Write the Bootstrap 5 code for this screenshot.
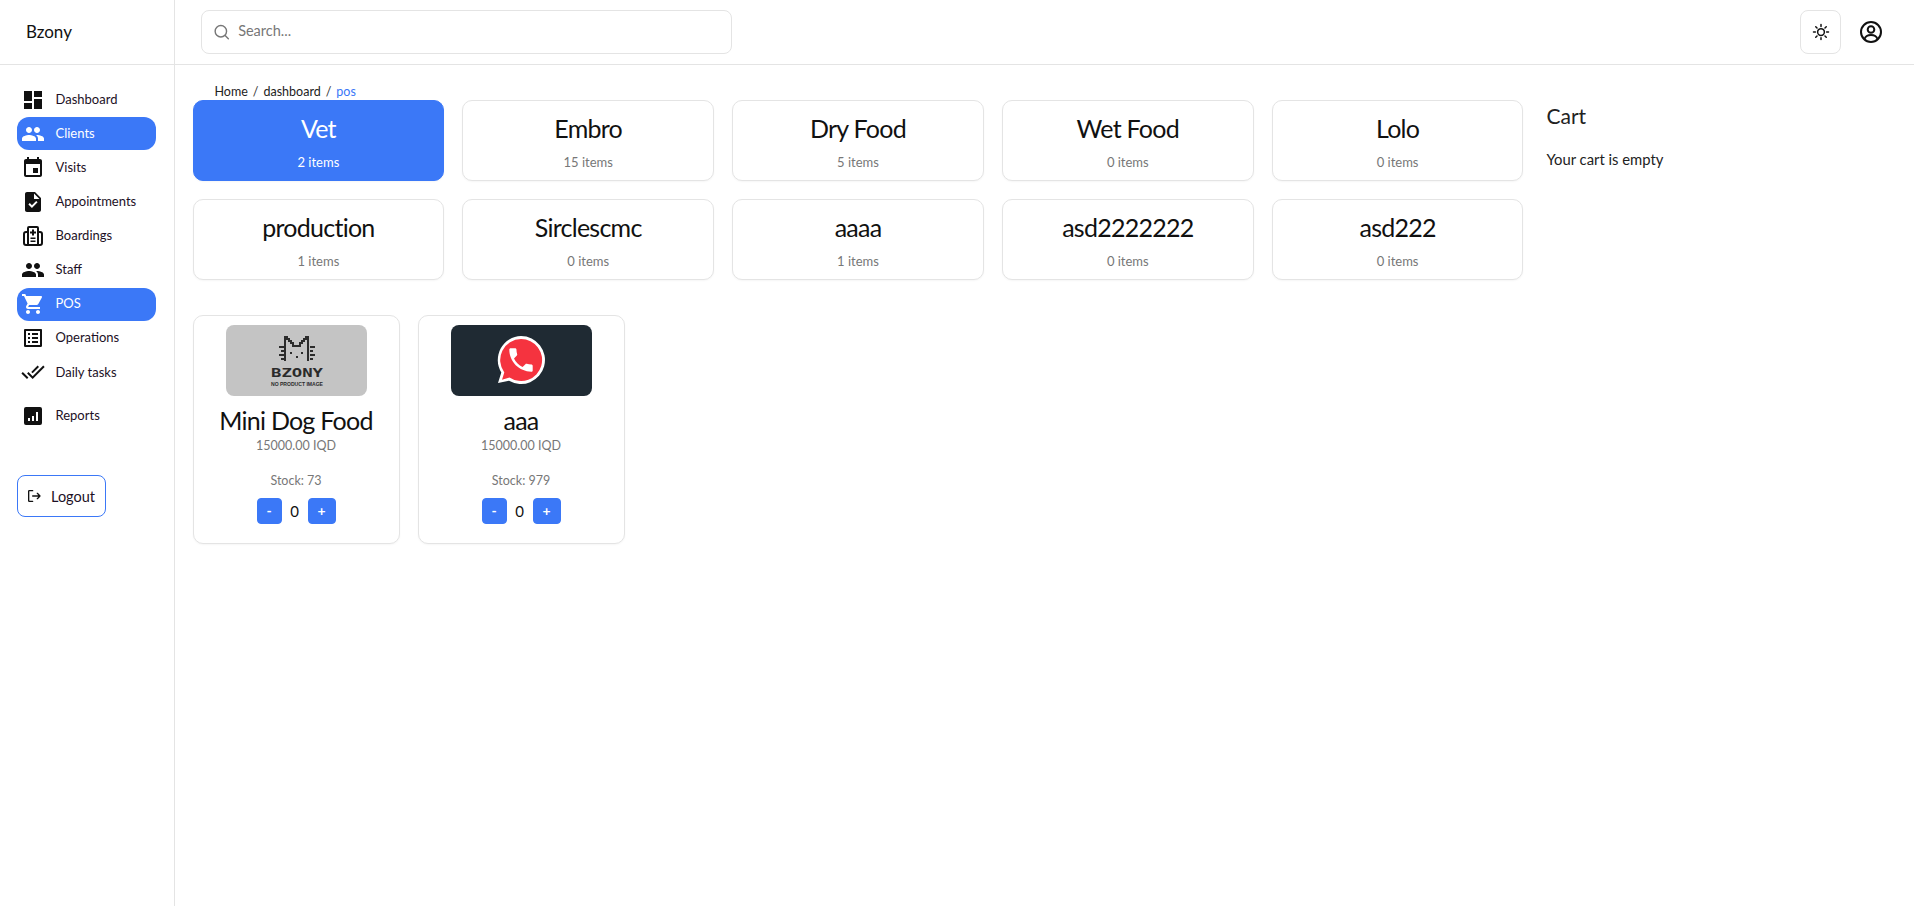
<!DOCTYPE html>
<html lang="en">
<head>
<meta charset="utf-8">
<title>Bzony POS</title>
<link href="https://cdn.jsdelivr.net/npm/bootstrap@5.3.0/dist/css/bootstrap.min.css" rel="stylesheet">
<style>
:root{--pri:#3b78f7;--line:#e4e4e4;}
html,body{height:100%;}
body{font-family:"Lato","Liberation Sans",sans-serif;color:#111;background:#fff;font-size:14px;}
.shell{min-height:906px;}
.side{width:175px;flex:0 0 175px;border-right:1px solid var(--line);}
.brand{height:65px;border-bottom:1px solid var(--line);padding-left:26px;font-size:17px;color:#111;}
.side-nav{padding:18px 18px 0 17px;}
.side-link{height:33px;margin-bottom:1.1px;border-radius:12px;padding:0 0 0 4px;color:#1c1025;font-size:13px;gap:10.5px;text-decoration:none;}
.side-link svg{width:24px;height:24px;flex:none;fill:#111;}
.side-link.on{background:var(--pri);color:#fff;}
.side-link.on svg{fill:#fff;}
.side-gap{margin-top:9.5px;}
.logout-btn{width:89px;height:42px;margin:42px 0 0 0;padding:0 0 0 8px;border:1px solid var(--pri);border-radius:8px;font-size:14.5px;color:#1c1025;gap:9px;}
.logout-btn:hover{border-color:var(--pri);}
.top{height:65px;border-bottom:1px solid var(--line);padding:0 31px 0 26px;}
.search{width:531px;height:44px;border:1px solid var(--line);border-radius:8px;padding-left:11px;gap:8px;color:#777;}
.search input{border:0;outline:0;padding:0 0 2px;font-size:14.5px;font-family:inherit;width:100%;background:transparent;}
.search input::placeholder{color:#777;opacity:1;}
.sun-btn{width:41px;height:44px;border:1px solid var(--line);border-radius:8px;padding:0;}
.acct{margin-left:18px;margin-right:0;padding:0;border:0;background:none;line-height:0;}
.content{padding:0 0 0 17.5px;}
.crumbs{margin:0;padding:0 0 0 22px;height:35px;align-items:flex-end;font-size:12.5px;--bs-breadcrumb-divider-color:#333;--bs-breadcrumb-item-padding-x:5px;--bs-breadcrumb-margin-bottom:0;}
.crumbs .breadcrumb-item{line-height:16px;color:#222;}
.crumbs .breadcrumb-item.active{color:var(--pri);}
.cat-grid{display:grid;grid-template-columns:repeat(5,251.8px);gap:18px;width:1332px;}
.cat{height:81px;border:1.5px solid var(--line);border-radius:10px;box-shadow:0 1px 2px rgba(0,0,0,.04);text-align:center;--bs-card-bg:#fff;}
.cat.sel{background:var(--pri);border-color:var(--pri);color:#fff;}
.cat-name{font-size:25px;letter-spacing:-.75px;line-height:32px;margin:11px 0 9px;font-weight:400;}
.cat-count{font-size:13px;line-height:18px;color:#777;}
.cat.sel .cat-count{color:#fff;}
.cart-pane{padding:0 0 0 22px;}
.cart-spacer{height:35px;}
.cart-title{font-size:21px;font-weight:400;margin:0;line-height:26px;padding-top:3px;color:#222;}
.cart-empty{font-size:14.8px;line-height:22px;margin:19px 0 0;color:#222;}
.prod-row{margin-top:35px;gap:18px;}
.prod{width:207px;height:229px;border:1.5px solid var(--line);border-radius:10px;box-shadow:0 1px 2px rgba(0,0,0,.04);text-align:center;padding-top:9px;}
.prod-pic{width:141px;height:71px;border-radius:8px;display:block;margin:0 auto;overflow:hidden;}
.prod-name{font-size:25px;letter-spacing:-.75px;font-weight:400;line-height:32px;margin:8px 0 0;}
.prod-price{font-size:12.5px;line-height:18px;color:#777;margin-top:1px;}
.prod-stock{font-size:12.5px;line-height:18px;color:#777;margin-top:17px;}
.qty{margin-top:8px;gap:0;}
.qty-btn{height:26px;padding:0;border-radius:4px;background:var(--pri);border-color:var(--pri);font-size:14px;line-height:1;font-weight:700;}
.qty-minus{width:25px;}
.qty-plus{width:28px;}
.qty-val{width:26px;font-size:15px;line-height:26px;}
</style>
</head>
<body>
<div class="d-flex shell">
  <aside class="side">
    <div class="brand d-flex align-items-center">Bzony</div>
    <nav class="side-nav d-flex flex-column">
      <a class="side-link d-flex align-items-center" href="#"><svg viewBox="0 0 24 24"><path d="M3 13h8V3H3v10zm0 8h8v-6H3v6zm10 0h8V11h-8v10zm0-18v6h8V3h-8z"/></svg>Dashboard</a>
      <a class="side-link on d-flex align-items-center" href="#"><svg viewBox="0 0 24 24"><path d="M16 11c1.66 0 2.99-1.34 2.99-3S17.66 5 16 5c-1.66 0-3 1.34-3 3s1.34 3 3 3zm-8 0c1.66 0 2.99-1.34 2.99-3S9.66 5 8 5C6.34 5 5 6.34 5 8s1.34 3 3 3zm0 2c-2.33 0-7 1.17-7 3.5V19h14v-2.5c0-2.33-4.67-3.5-7-3.5zm8 0c-.29 0-.62.02-.97.05 1.16.84 1.97 1.97 1.97 3.45V19h6v-2.5c0-2.33-4.67-3.5-7-3.5z"/></svg>Clients</a>
      <a class="side-link d-flex align-items-center" href="#"><svg viewBox="0 0 24 24"><path d="M17 12h-5v5h5v-5zM16 1v2H8V1H6v2H5c-1.11 0-1.99.9-1.99 2L3 19c0 1.1.89 2 2 2h14c1.1 0 2-.9 2-2V5c0-1.1-.9-2-2-2h-1V1h-2zm3 18H5V8h14v11z"/></svg>Visits</a>
      <a class="side-link d-flex align-items-center" href="#"><svg viewBox="0 0 24 24"><path d="M14 2H6c-1.1 0-1.99.9-1.99 2L4 20c0 1.1.89 2 1.99 2H18c1.1 0 2-.9 2-2V8l-6-6zm-3.06 16L7.4 14.46l1.41-1.41 2.12 2.12 4.24-4.24 1.41 1.41L10.94 18zM13 9V3.5L18.5 9H13z"/></svg>Appointments</a>
      <a class="side-link d-flex align-items-center" href="#"><svg viewBox="0 0 24 24"><path fill-rule="evenodd" d="M8 2h8a2 2 0 0 1 2 2v3h1a3 3 0 0 1 3 3v9a3 3 0 0 1-3 3H5a3 3 0 0 1-3-3v-9a3 3 0 0 1 3-3h1V4a2 2 0 0 1 2-2zm0 2v16h8V4H8zM6 9H5a1 1 0 0 0-1 1v9a1 1 0 0 0 1 1h1V9zm12 0v11h1a1 1 0 0 0 1-1v-9a1 1 0 0 0-1-1h-1zM11 5.500h2V7.500h2v2h-2v2h-2v-2H9v-2h2zM9.500 13.500h5V15h-5zM9.500 16.500h5V18h-5z"/></svg>Boardings</a>
      <a class="side-link d-flex align-items-center" href="#"><svg viewBox="0 0 24 24"><path d="M16 11c1.66 0 2.99-1.34 2.99-3S17.66 5 16 5c-1.66 0-3 1.34-3 3s1.34 3 3 3zm-8 0c1.66 0 2.99-1.34 2.99-3S9.66 5 8 5C6.34 5 5 6.34 5 8s1.34 3 3 3zm0 2c-2.33 0-7 1.17-7 3.5V19h14v-2.5c0-2.33-4.67-3.5-7-3.5zm8 0c-.29 0-.62.02-.97.05 1.16.84 1.97 1.97 1.97 3.45V19h6v-2.5c0-2.33-4.67-3.5-7-3.5z"/></svg>Staff</a>
      <a class="side-link on d-flex align-items-center" href="#"><svg viewBox="0 0 24 24"><path d="M7 18c-1.1 0-1.99.9-1.99 2S5.900 22 7 22s2-.9 2-2-.9-2-2-2zM1 2v2h2l3.600 7.590-1.350 2.450c-.16.28-.25.61-.25.96 0 1.100.9 2 2 2h12v-2H7.420c-.14 0-.25-.11-.25-.25l.03-.12.9-1.630h7.450c.75 0 1.410-.41 1.750-1.030l3.580-6.490c.08-.14.12-.31.12-.48 0-.55-.45-1-1-1H5.210l-.94-2H1zm16 16c-1.100 0-1.990.9-1.990 2s.89 2 1.990 2 2-.9 2-2-.9-2-2-2z"/></svg>POS</a>
      <a class="side-link d-flex align-items-center" href="#"><svg viewBox="0 0 24 24"><path d="M19 5v14H5V5h14m1.100-2H3.900c-.5 0-.9.4-.9.9v16.200c0 .4.4.9.9.9h16.200c.4 0 .9-.5.9-.9V3.900c0-.5-.5-.9-.9-.9zM11 7h6v2h-6V7zm0 4h6v2h-6v-2zm0 4h6v2h-6zM7 7h2v2H7zm0 4h2v2H7zm0 4h2v2H7z"/></svg>Operations</a>
      <a class="side-link d-flex align-items-center" href="#"><svg viewBox="0 0 24 24"><path d="M18 7l-1.410-1.410-6.340 6.340 1.410 1.410L18 7zm4.240-1.410L11.660 16.170 7.480 12l-1.410 1.410L11.660 19l12-12-1.420-1.410zM.41 13.410L6 19l1.410-1.410L1.830 12 .41 13.410z"/></svg>Daily tasks</a>
      <a class="side-link side-gap d-flex align-items-center" href="#"><svg viewBox="0 0 24 24"><path fill-rule="evenodd" d="M5 3h14a2 2 0 0 1 2 2v14a2 2 0 0 1-2 2H5a2 2 0 0 1-2-2V5a2 2 0 0 1 2-2zm2 11v3h2v-3H7zm4-2v5h2v-5h-2zm4-4v9h2V8h-2z"/></svg>Reports</a>
      <button class="btn logout-btn d-flex align-items-center" type="button"><svg width="16" height="16" viewBox="0 0 24 24" fill="none" stroke="#111" stroke-width="2" stroke-linecap="round" stroke-linejoin="round"><path d="M10 4H5a1 1 0 0 0-1 1v14a1 1 0 0 0 1 1h5"/><path d="M10 12h11M17 8l4 4-4 4"/></svg>Logout</button>
    </nav>
  </aside>
  <div class="flex-grow-1 d-flex flex-column">
    <header class="top d-flex align-items-center justify-content-between">
      <label class="search d-flex align-items-center mb-0">
        <svg width="18" height="18" viewBox="0 0 24 24" fill="none" stroke="#777" stroke-width="2" stroke-linecap="round"><circle cx="11" cy="11" r="8"/><path d="M17 17l4.500 4.500"/></svg>
        <input type="text" placeholder="Search...">
      </label>
      <div class="d-flex align-items-center">
        <button class="btn sun-btn d-flex align-items-center justify-content-center" type="button" aria-label="Theme"><svg width="18" height="18" viewBox="0 0 24 24" fill="none" stroke="#111" stroke-width="2" stroke-linecap="round"><circle cx="12" cy="12" r="4.500"/><path d="M12 2v2.500M12 19.500V22M2 12h2.500M19.500 12H22M5 5l1.700 1.700M17.300 17.300L19 19M5 19l1.700-1.700M17.300 6.700L19 5"/></svg></button>
        <button class="acct" type="button" aria-label="Account"><svg width="24" height="24" viewBox="0 0 24 24" fill="none" stroke="#111" stroke-width="2"><circle cx="12" cy="12" r="10"/><circle cx="12" cy="9.500" r="3.300"/><path d="M5.500 19c1-3 3.500-4 6.500-4s5.500 1 6.500 4"/></svg></button>
      </div>
    </header>
    <main class="content d-flex">
      <div>
        <ol class="breadcrumb crumbs d-flex">
          <li class="breadcrumb-item">Home</li>
          <li class="breadcrumb-item">dashboard</li>
          <li class="breadcrumb-item active">pos</li>
        </ol>
        <div class="cat-grid">
          <div class="card cat sel"><div class="cat-name">Vet</div><div class="cat-count">2 items</div></div>
          <div class="card cat"><div class="cat-name">Embro</div><div class="cat-count">15 items</div></div>
          <div class="card cat"><div class="cat-name">Dry Food</div><div class="cat-count">5 items</div></div>
          <div class="card cat"><div class="cat-name">Wet Food</div><div class="cat-count">0 items</div></div>
          <div class="card cat"><div class="cat-name">Lolo</div><div class="cat-count">0 items</div></div>
          <div class="card cat"><div class="cat-name">production</div><div class="cat-count">1 items</div></div>
          <div class="card cat"><div class="cat-name">Sirclescmc</div><div class="cat-count">0 items</div></div>
          <div class="card cat"><div class="cat-name">aaaa</div><div class="cat-count">1 items</div></div>
          <div class="card cat"><div class="cat-name">asd2222222</div><div class="cat-count">0 items</div></div>
          <div class="card cat"><div class="cat-name">asd222</div><div class="cat-count">0 items</div></div>
        </div>
        <div class="d-flex prod-row">
          <div class="card prod">
            <svg class="prod-pic" viewBox="0 0 141 71" role="img" aria-label="Bzony no product image">
              <rect width="141" height="71" fill="#c4c4c4"/>
              <path d="M59 36V12h2v2h2v2h2v2h2v3h7v-3h2v-2h2v-2h2v-2h2v24" fill="none" stroke="#2b2b2b" stroke-width="2" shape-rendering="crispEdges"/>
              <g fill="#2b2b2b" shape-rendering="crispEdges">
                <rect x="53" y="21" width="5" height="2"/><rect x="55" y="25" width="3" height="2"/><rect x="53" y="29" width="5" height="2"/><rect x="55" y="33" width="3" height="2"/>
                <rect x="84" y="21" width="5" height="2"/><rect x="84" y="25" width="3" height="2"/><rect x="84" y="29" width="5" height="2"/><rect x="84" y="33" width="3" height="2"/>
                <rect x="64" y="27" width="2" height="2"/><rect x="75" y="27" width="2" height="2"/><rect x="69.500" y="31" width="2" height="2"/>
              </g>
              <text x="45" y="52" textLength="52" lengthAdjust="spacingAndGlyphs" fill="#2b2b2b" font-family="DejaVu Sans Mono, monospace" font-weight="700" font-size="13">BZONY</text>
              <text x="45" y="61" textLength="52" lengthAdjust="spacingAndGlyphs" fill="#2b2b2b" font-family="Liberation Sans, sans-serif" font-weight="700" font-size="5">NO PRODUCT IMAGE</text>
            </svg>
            <div class="prod-name">Mini Dog Food</div>
            <div class="prod-price">15000.00 IQD</div>
            <div class="prod-stock">Stock: 73</div>
            <div class="qty d-flex justify-content-center align-items-center">
              <button class="btn btn-primary qty-btn qty-minus" type="button">-</button><span class="qty-val">0</span><button class="btn btn-primary qty-btn qty-plus" type="button">+</button>
            </div>
          </div>
          <div class="card prod">
            <svg class="prod-pic" viewBox="0 0 141 71" role="img" aria-label="Product image">
              <rect width="141" height="71" fill="#1f2a33"/>
              <path d="M70 11a24 24 0 1 1-12 44.800L47 58l3.300-10.500A24 24 0 0 1 70 11z" fill="#fff"/>
              <path d="M70 14a21 21 0 1 1-11.500 38.500L51 54.800l2.300-7.300A21 21 0 0 1 70 14z" fill="#f5333f"/>
              <path transform="translate(54.400 19.400) scale(1.300)" fill="#fff" d="M6.620 10.790c1.440 2.830 3.760 5.140 6.590 6.590l2.200-2.200c.27-.27.67-.36 1.020-.24 1.120.37 2.330.57 3.570.57.55 0 1 .45 1 1V20c0 .55-.45 1-1 1-9.390 0-17-7.610-17-17 0-.55.45-1 1-1h3.500c.55 0 1 .45 1 1 0 1.250.2 2.450.57 3.570.11.350.03.740-.25 1.020l-2.200 2.200z"/>
            </svg>
            <div class="prod-name">aaa</div>
            <div class="prod-price">15000.00 IQD</div>
            <div class="prod-stock">Stock: 979</div>
            <div class="qty d-flex justify-content-center align-items-center">
              <button class="btn btn-primary qty-btn qty-minus" type="button">-</button><span class="qty-val">0</span><button class="btn btn-primary qty-btn qty-plus" type="button">+</button>
            </div>
          </div>
        </div>
      </div>
      <section class="cart-pane">
        <div class="cart-spacer"></div>
        <h2 class="cart-title">Cart</h2>
        <p class="cart-empty">Your cart is empty</p>
      </section>
    </main>
  </div>
</div>
<script src="https://cdn.jsdelivr.net/npm/bootstrap@5.3.0/dist/js/bootstrap.bundle.min.js"></script>
</body>
</html>
